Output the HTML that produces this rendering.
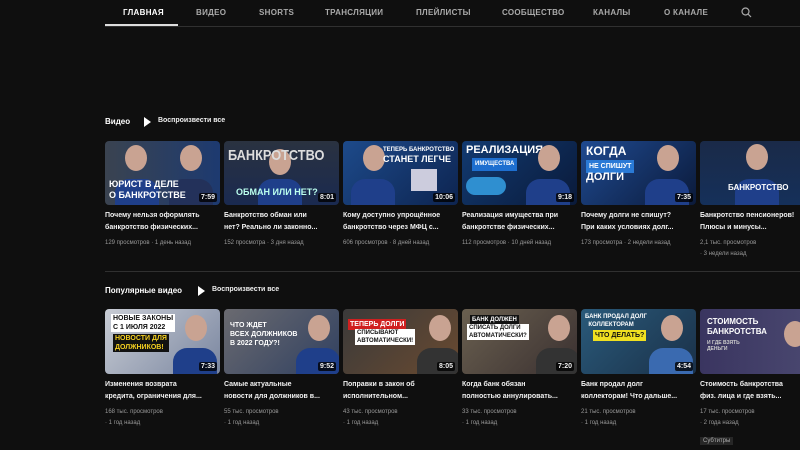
<!DOCTYPE html><html><head><meta charset="utf-8"><style>
*{margin:0;padding:0;box-sizing:border-box}
body{width:800px;height:450px;overflow:hidden;background:#0f0f0f;font-family:"Liberation Sans","Noto Sans CJK SC",sans-serif;color:#f1f1f1;position:relative}
.tab{position:absolute;top:8px;font-size:8px;font-weight:bold;color:#aaa;letter-spacing:.3px}
.hl{position:absolute;top:26px;left:105px;width:695px;height:1px;background:#303030}
.ul{position:absolute;top:24px;left:105px;width:73px;height:2px;background:#ddd}
.sec{position:absolute;font-size:8px;font-weight:bold;color:#fff}
.pl{position:absolute;font-size:7px;font-weight:bold;color:#eee}
.tri{position:absolute;width:0;height:0;border-left:7px solid #fff;border-top:5px solid transparent;border-bottom:5px solid transparent}
.card{position:absolute;width:115px}
.th{height:64px;border-radius:4px;position:relative;overflow:hidden}
.d{position:absolute;right:3px;bottom:3px;background:rgba(0,0,0,.8);font-size:7px;font-weight:bold;padding:1px 2px;border-radius:2px}
.t{font-size:7px;font-weight:bold;line-height:12px;margin-top:5px;color:#f1f1f1}
.m{font-size:6px;color:#999;line-height:11px;margin-top:4px}
.big{position:absolute;font-weight:bold;color:#fff;font-size:10px;line-height:11px}
.face{position:absolute;width:22px;height:26px;border-radius:50%;background:#c9a392}
.suit{position:absolute;width:44px;height:26px;border-radius:14px 14px 0 0;background:#1f3f8a;bottom:0}
</style></head><body>
<div class="tab" style="left:123px;color:#fff">ГЛАВНАЯ</div>
<div class="tab" style="left:196px">ВИДЕО</div>
<div class="tab" style="left:259px">SHORTS</div>
<div class="tab" style="left:325px">ТРАНСЛЯЦИИ</div>
<div class="tab" style="left:416px">ПЛЕЙЛИСТЫ</div>
<div class="tab" style="left:502px">СООБЩЕСТВО</div>
<div class="tab" style="left:593px">КАНАЛЫ</div>
<div class="tab" style="left:664px">О КАНАЛЕ</div>
<svg style="position:absolute;left:741px;top:7px" width="11" height="11" viewBox="0 0 11 11"><circle cx="4.5" cy="4.5" r="3.5" fill="none" stroke="#aaa" stroke-width="1.2"/><line x1="7" y1="7" x2="10" y2="10" stroke="#aaa" stroke-width="1.2"/></svg>
<div class="hl"></div><div class="ul"></div>

<div class="sec" style="left:105px;top:117px">Видео</div>
<div class="tri" style="left:144px;top:117px"></div>
<div class="pl" style="left:158px;top:117px">Воспроизвести все</div>

<div class="card" style="left:105px;top:141px"><div class="th" style="background:linear-gradient(90deg,#3a4350,#1d3a70)"><div class="face" style="left:20px;top:4px"></div><div class="suit" style="left:10px"></div><div class="face" style="left:75px;top:4px"></div><div class="suit" style="left:64px;background:#23315a"></div><div class="big" style="left:4px;top:38px;font-size:9px">ЮРИСТ В ДЕЛЕ<br>О БАНКРОТСТВЕ</div><div class="d">7:59</div></div><div class="t">Почему нельзя оформлять<br>банкротство физических...</div><div class="m">129 просмотров · 1 день назад</div></div>
<div class="card" style="left:224px;top:141px"><div class="th" style="background:linear-gradient(180deg,#2a3240,#1a2a50)"><div class="face" style="left:45px;top:8px"></div><div class="suit" style="left:34px"></div><div class="big" style="left:4px;top:6px;font-size:15px;line-height:18px;color:#ddd;transform:scaleX(.85);transform-origin:left">БАНКРОТСТВО</div><div class="big" style="left:12px;top:46px;font-size:9px;color:#bfe">ОБМАН ИЛИ НЕТ?</div><div class="d">8:01</div></div><div class="t">Банкротство обман или<br>нет? Реально ли законно...</div><div class="m">152 просмотра · 3 дня назад</div></div>
<div class="card" style="left:343px;top:141px"><div class="th" style="background:linear-gradient(135deg,#1d4a8a,#0d2450)"><div class="face" style="left:20px;top:4px"></div><div class="suit" style="left:8px"></div><div class="big" style="left:40px;top:5px;font-size:6px;line-height:9px">ТЕПЕРЬ БАНКРОТСТВО<br><span style="font-size:9px">СТАНЕТ ЛЕГЧЕ</span></div><div style="position:absolute;left:68px;top:28px;width:26px;height:22px;background:#ccd"></div><div class="d">10:06</div></div><div class="t">Кому доступно упрощённое<br>банкротство через МФЦ с...</div><div class="m">606 просмотров · 8 дней назад</div></div>
<div class="card" style="left:462px;top:141px"><div class="th" style="background:linear-gradient(135deg,#123a70,#0a1a3a)"><div class="big" style="left:4px;top:4px;font-size:11px">РЕАЛИЗАЦИЯ</div><div class="big" style="left:10px;top:17px;font-size:6px;background:#1e6fd0;padding:1px 3px">ИМУЩЕСТВА</div><div style="position:absolute;left:4px;top:36px;width:40px;height:18px;border-radius:9px;background:#2f8fd0"></div><div class="face" style="left:76px;top:4px"></div><div class="suit" style="left:64px"></div><div class="d">9:18</div></div><div class="t">Реализация имущества при<br>банкротстве физических...</div><div class="m">112 просмотров · 10 дней назад</div></div>
<div class="card" style="left:581px;top:141px"><div class="th" style="background:linear-gradient(135deg,#1f4a90,#0b1a3a)"><div class="big" style="left:5px;top:5px;font-size:12px">КОГДА</div><div class="big" style="left:5px;top:19px;font-size:7px;background:#2a7ad6;padding:1px 3px">НЕ СПИШУТ</div><div class="big" style="left:5px;top:31px;font-size:11px">ДОЛГИ</div><div class="face" style="left:76px;top:4px"></div><div class="suit" style="left:64px"></div><div class="d">7:35</div></div><div class="t">Почему долги не спишут?<br>При каких условиях долг...</div><div class="m">173 просмотра · 2 недели назад</div></div>
<div class="card" style="left:700px;top:141px"><div class="th" style="background:linear-gradient(180deg,#1a2a48,#15305a)"><div class="face" style="left:46px;top:3px"></div><div class="suit" style="left:35px"></div><div class="big" style="left:28px;top:41px;font-size:8px">БАНКРОТСТВО</div></div><div class="t">Банкротство пенсионеров!<br>Плюсы и минусы...</div><div class="m">2,1 тыс. просмотров<br>· 3 недели назад</div></div>

<div class="hl" style="top:271px"></div>
<div class="sec" style="left:105px;top:286px">Популярные видео</div>
<div class="tri" style="left:198px;top:286px"></div>
<div class="pl" style="left:212px;top:286px">Воспроизвести все</div>

<div class="card" style="left:105px;top:309px"><div class="th" style="height:65px;background:linear-gradient(135deg,#c8ccd4,#7a86a0)"><div class="big" style="left:6px;top:5px;font-size:7px;line-height:9px;background:#fff;color:#111;padding:0 2px">НОВЫЕ ЗАКОНЫ<br>С 1 ИЮЛЯ 2022</div><div class="big" style="left:8px;top:25px;font-size:7px;line-height:9px;background:#111;color:#f5d020;padding:0 2px">НОВОСТИ ДЛЯ<br>ДОЛЖНИКОВ!</div><div class="face" style="left:80px;top:6px"></div><div class="suit" style="left:68px"></div><div class="d">7:33</div></div><div class="t">Изменения возврата<br>кредита, ограничения для...</div><div class="m">168 тыс. просмотров<br>· 1 год назад</div></div>
<div class="card" style="left:224px;top:309px"><div class="th" style="height:65px;background:linear-gradient(135deg,#6a6a70,#304060)"><div class="big" style="left:6px;top:12px;font-size:7px;line-height:9px">ЧТО ЖДЕТ<br>ВСЕХ ДОЛЖНИКОВ<br>В 2022 ГОДУ?!</div><div class="face" style="left:84px;top:6px"></div><div class="suit" style="left:72px"></div><div class="d">9:52</div></div><div class="t">Самые актуальные<br>новости для должников в...</div><div class="m">55 тыс. просмотров<br>· 1 год назад</div></div>
<div class="card" style="left:343px;top:309px"><div class="th" style="height:65px;background:linear-gradient(135deg,#3a3a3a,#6a4a30)"><div class="big" style="left:5px;top:10px;font-size:7px;background:#d02020;padding:0 2px">ТЕПЕРЬ ДОЛГИ</div><div class="big" style="left:12px;top:20px;font-size:6px;background:#fff;color:#111;padding:0 2px;line-height:8px">СПИСЫВАЮТ<br>АВТОМАТИЧЕСКИ!</div><div class="face" style="left:86px;top:6px"></div><div class="suit" style="left:74px;background:#333"></div><div class="d">8:05</div></div><div class="t">Поправки в закон об<br>исполнительном...</div><div class="m">43 тыс. просмотров<br>· 1 год назад</div></div>
<div class="card" style="left:462px;top:309px"><div class="th" style="height:65px;background:linear-gradient(135deg,#6a6050,#3a3030)"><div class="big" style="left:8px;top:6px;font-size:6px;background:#111;padding:0 2px">БАНК ДОЛЖЕН</div><div class="big" style="left:5px;top:15px;font-size:6px;background:#fff;color:#111;padding:0 2px;line-height:8px">СПИСАТЬ ДОЛГИ<br>АВТОМАТИЧЕСКИ?</div><div class="face" style="left:86px;top:6px"></div><div class="suit" style="left:74px;background:#333"></div><div class="d">7:20</div></div><div class="t">Когда банк обязан<br>полностью аннулировать...</div><div class="m">33 тыс. просмотров<br>· 1 год назад</div></div>
<div class="card" style="left:581px;top:309px"><div class="th" style="height:65px;background:linear-gradient(135deg,#2a5a7a,#1a3048)"><div class="big" style="left:4px;top:4px;font-size:6px;line-height:8px">БАНК ПРОДАЛ ДОЛГ<br>&nbsp;&nbsp;КОЛЛЕКТОРАМ</div><div class="big" style="left:12px;top:21px;font-size:7px;background:#f0e020;color:#111;padding:0 2px">ЧТО ДЕЛАТЬ?</div><div class="face" style="left:80px;top:6px"></div><div class="suit" style="left:68px;background:#3a6ab0"></div><div class="d">4:54</div></div><div class="t">Банк продал долг<br>коллекторам! Что дальше...</div><div class="m">21 тыс. просмотров<br>· 1 год назад</div></div>
<div class="card" style="left:700px;top:309px"><div class="th" style="height:65px;background:linear-gradient(90deg,#3a3560,#4a4870)"><div class="big" style="left:7px;top:8px;font-size:8px;line-height:10px">СТОИМОСТЬ<br>БАНКРОТСТВА</div><div class="big" style="left:7px;top:31px;font-size:5px;line-height:6px;color:#ccc">И ГДЕ ВЗЯТЬ<br>ДЕНЬГИ</div><div class="face" style="left:84px;top:12px"></div></div><div class="t">Стоимость банкротства<br>физ. лица и где взять...</div><div class="m">17 тыс. просмотров<br>· 2 года назад</div><div style="display:inline-block;margin-top:2px;background:#272727;color:#aaa;font-size:6px;padding:1px 3px">Субтитры</div></div>
</body></html>
